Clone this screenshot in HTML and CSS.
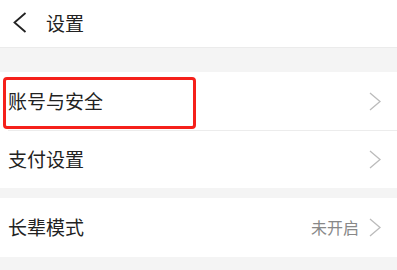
FILE: index.html
```html
<!DOCTYPE html>
<html lang="zh">
<head>
<meta charset="utf-8">
<link rel="stylesheet" href="styles.css">
</head>
<body>
<header class="topbar">
  <svg class="back" width="14" height="21" viewBox="0 0 14 21"><polyline points="12.5,1 1.5,10.5 12.5,20" fill="none" stroke="#222" stroke-width="1.8"/></svg>
  <span class="title">设置</span>
</header>
<section class="group first">
  <div class="row">
    <span class="label">账号与安全</span>
    <svg class="chev" width="12" height="19" viewBox="0 0 12 19"><polyline points="1,1 11,9.5 1,18" fill="none" stroke="#bbb" stroke-width="1.3"/></svg>
    <div class="highlight"></div>
  </div>
  <div class="row sep">
    <span class="label">支付设置</span>
    <svg class="chev" width="12" height="19" viewBox="0 0 12 19"><polyline points="1,1 11,9.5 1,18" fill="none" stroke="#bbb" stroke-width="1.3"/></svg>
  </div>
</section>
<section class="group second">
  <div class="row tall">
    <span class="label">长辈模式</span>
    <span class="value">未开启</span>
    <svg class="chev" width="12" height="19" viewBox="0 0 12 19"><polyline points="1,1 11,9.5 1,18" fill="none" stroke="#bbb" stroke-width="1.3"/></svg>
  </div>
</section>
</body>
</html>
```
FILE: styles.css
```css
html, body {
  margin: 0;
  padding: 0;
  background: #f4f4f4;
  font-family: "Noto Sans CJK SC", "Noto Sans", sans-serif;
  color: #222;
}
.topbar {
  height: 47px;
  background: #fff;
  border-bottom: 1px solid #ebebeb;
  display: flex;
  align-items: center;
  padding-left: 13px;
}
.back {
  display: block;
  margin-top: -2px;
}
.title {
  font-size: 19px;
  margin-left: 19px;
  margin-top: -3px;
}
.group {
  background: #fff;
}
.group.first {
  margin-top: 24px;
}
.group.second {
  margin-top: 10px;
}
.row {
  position: relative;
  height: 58px;
  display: flex;
  align-items: center;
  padding: 0 16px 0 8px;
}
.row.sep {
  height: 57px;
  border-top: 1px solid #ececec;
  margin-left: 8px;
  padding-left: 0;
}
.row.tall {
  height: 59px;
}
.label {
  font-size: 19px;
  flex: 1;
  margin-top: -2px;
}
.value {
  font-size: 16px;
  color: #888;
  margin-right: 10px;
  margin-top: -2px;
}
.chev {
  display: block;
}
.highlight {
  position: absolute;
  left: 3px;
  top: 5px;
  width: 187px;
  height: 46px;
  border: 3px solid #f5201b;
  border-radius: 4px;
}
```
